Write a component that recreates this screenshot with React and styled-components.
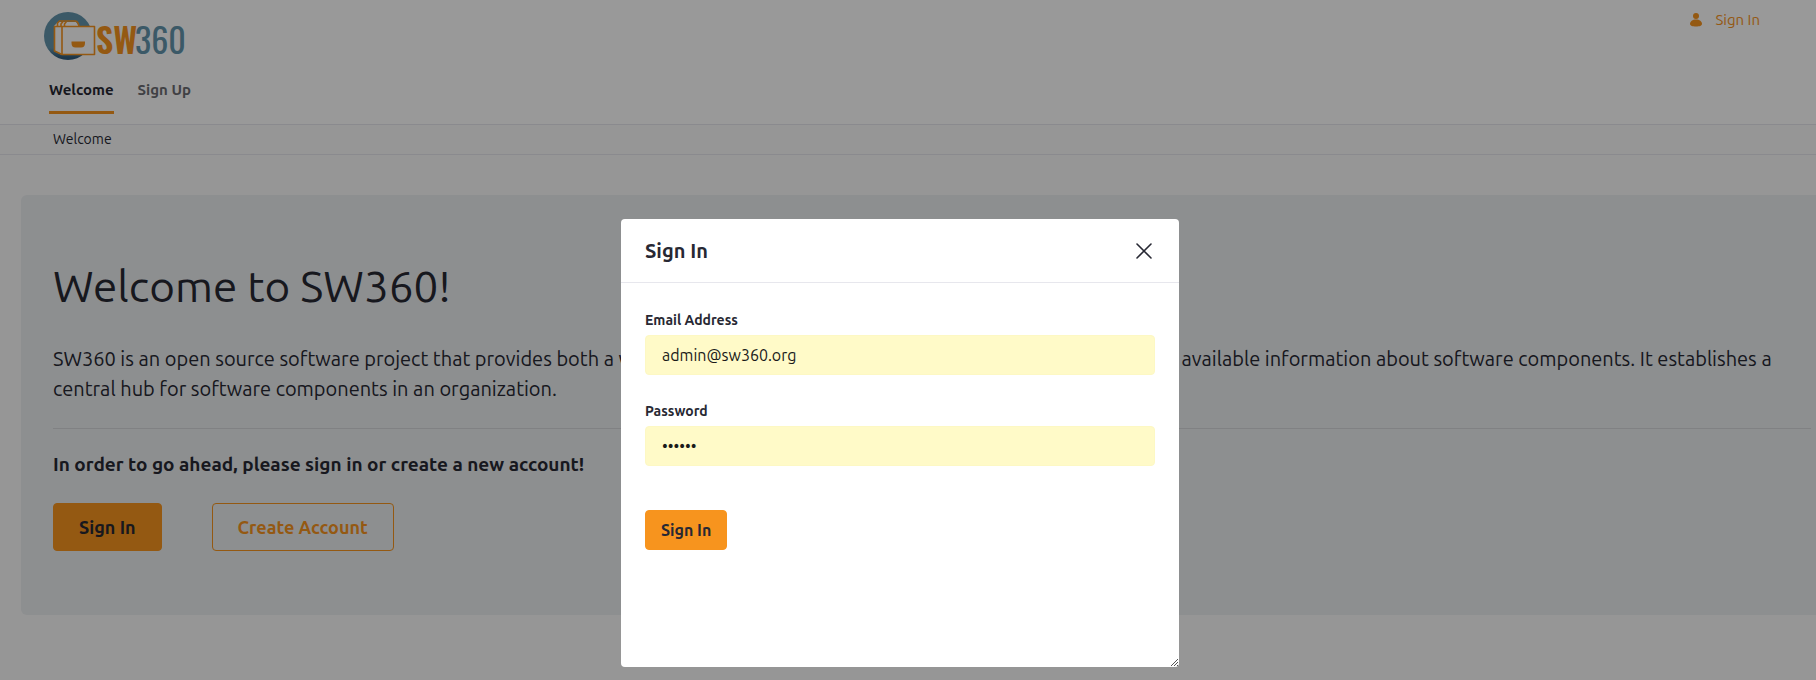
import React from 'react';
import styled, { createGlobalStyle, css } from 'styled-components';

const color = {
  orange: '#f7941e',
  ink: '#272833',
  muted: '#6b6c72',
  blue: '#6394ac',
  navy: '#2f5c7d',
};

const GlobalStyle = createGlobalStyle`
  *, *::before, *::after { box-sizing: border-box; }
  body {
    margin: 0;
    background: #fafafa;
    color: ${color.ink};
    font-family: Ubuntu, "Noto Sans", "Open Sans", sans-serif;
    font-size: 14px;
  }
  button, input { font: inherit; color: inherit; }
  h1, h2, p { margin: 0; }
`;

const Header = styled.header`
  background: #fff;
`;

const Banner = styled.div`
  display: flex;
  justify-content: space-between;
  align-items: flex-start;
  padding: 11px 56px 0 44px;
`;

const LogoLink = styled.a`
  display: block;
  height: 50px;
`;

const LogoImage = styled.svg`
  overflow: visible;
`;

const LogoText = styled.text`
  font-family: Oswald, Roboto, sans-serif;
  font-size: 34px;
  font-weight: ${({ $bold }) => ($bold ? 600 : 400)};
  fill: ${({ $bold }) => ($bold ? color.orange : color.blue)};
`;

const UserLink = styled.a`
  display: flex;
  align-items: center;
  gap: 13px;
  font-size: 15px;
  line-height: 18px;
  color: ${color.orange};
  text-decoration: none;
`;

const Nav = styled.nav`
  display: flex;
  gap: 24px;
  padding: 0 49px 10px;
  border-bottom: 1px solid #e7e7ed;
`;

const NavLink = styled.a`
  padding: 18px 0 10px;
  font-size: 15px;
  line-height: 22px;
  font-weight: 700;
  text-decoration: none;
  color: ${({ $active }) => ($active ? color.ink : color.muted)};
  border-bottom: 3px solid ${({ $active }) => ($active ? color.orange : 'transparent')};
`;

const Breadcrumb = styled.nav`
  padding: 0 53px;
  line-height: 29px;
  border-bottom: 1px solid #e7e7ed;
`;

const Main = styled.main`
  padding: 40px 0 40px 21px;
`;

const Jumbotron = styled.section`
  padding: 64px 5px 64px 32px;
  background: #ebeef0;
  border-radius: 6px 0 0 6px;
`;

const Heading = styled.h1`
  font-size: 44px;
  line-height: 54px;
  font-weight: 400;
`;

const Intro = styled.p`
  margin-top: 31px;
  padding-right: 16px;
  font-size: 20px;
  line-height: 30px;
`;

const Divider = styled.hr`
  margin: 24px 0 22px;
  border: 0;
  border-top: 1px solid #d5d8da;
`;

const Lead = styled.p`
  font-size: 19px;
  line-height: 27px;
  font-weight: 700;
`;

const Actions = styled.div`
  display: flex;
  gap: 50px;
  margin-top: 25px;
`;

const Button = styled.button`
  height: ${({ $large }) => ($large ? 48 : 40)}px;
  padding: 0 ${({ $large }) => ($large ? 25 : 15)}px;
  border: 1px solid ${color.orange};
  border-radius: 4px;
  font-size: ${({ $large }) => ($large ? 18 : 16)}px;
  font-weight: 700;
  cursor: pointer;
  ${({ $outline }) =>
    $outline
      ? css`
          background: transparent;
          color: ${color.orange};
        `
      : css`
          background: ${color.orange};
          color: ${color.ink};
        `}
`;

const Backdrop = styled.div`
  position: fixed;
  inset: 0;
  display: flex;
  justify-content: center;
  align-items: flex-start;
  padding: 219px 16px 0 0;
  background: rgba(0, 0, 0, 0.4);
`;

const Dialog = styled.section`
  position: relative;
  width: 558px;
  min-height: 448px;
  background: #fff;
  border-radius: 4px;
`;

const DialogHeader = styled.header`
  display: flex;
  justify-content: space-between;
  align-items: center;
  height: 64px;
  padding: 0 24px;
  border-bottom: 1px solid #e7e7ed;
`;

const DialogTitle = styled.h2`
  font-size: 20px;
  line-height: 24px;
`;

const CloseButton = styled.button`
  display: flex;
  padding: 3px;
  border: 0;
  background: none;
  cursor: pointer;
`;

const Form = styled.form`
  display: flex;
  flex-direction: column;
  align-items: flex-start;
  gap: 26px;
  padding: 27px 24px 24px;
`;

const Field = styled.div`
  display: flex;
  flex-direction: column;
  gap: 5px;
  width: 100%;
`;

const Label = styled.label`
  font-size: 14px;
  line-height: 20px;
  font-weight: 700;
`;

const Input = styled.input`
  width: 100%;
  height: 40px;
  padding: 0 16px;
  border: 1px solid #fdf8c4;
  border-radius: 4px;
  background: #fffac8;
  color: #1a1a1a;
  font-size: 16px;
  outline: none;
`;

const FormFooter = styled.div`
  padding-top: 18px;
`;

const ResizeGrip = styled.svg`
  position: absolute;
  right: 0;
  bottom: 0;
  cursor: nwse-resize;
`;

const Logo = () => (
  <LogoImage width="146" height="50" viewBox="0 0 146 50" role="img" aria-label="SW360">
    <defs>
      <linearGradient id="disc" x1="0" y1="0" x2="0" y2="1">
        <stop offset="0.75" stopColor={color.blue} />
        <stop offset="0.95" stopColor={color.navy} />
      </linearGradient>
    </defs>
    <circle cx="24" cy="25" r="24" fill="url(#disc)" />
    <path d="M10 15 L14 11 H32 L35 15 H51 V44 H18 L10 40 Z" fill="#fff" />
    <g fill="none" stroke={color.orange} strokeWidth="1.6" strokeLinejoin="round">
      <path d="M18 15.500 H50.500 V43.500 H18 Z" />
      <path d="M18 15.500 H10.500 V40 L18 43.500" />
      <path d="M13.500 15 V12 L15.500 10 H31 Q33 10 34 12 L35 15" />
      <path d="M17 15 V13 L19 10.500 M20.500 15 V13 L22.500 10.500" />
    </g>
    <path d="M27.500 30.500 H41 V32 Q41 36.500 37 36.500 H31.500 Q27.500 36.500 27.500 32 Z" fill={color.orange} />
    <LogoText x="52" y="43" $bold>SW</LogoText>
    <LogoText x="91" y="43">360</LogoText>
  </LogoImage>
);

const UserIcon = () => (
  <svg width="12" height="14" viewBox="0 0 12 14" fill="currentColor" aria-hidden="true">
    <circle cx="6" cy="3" r="3" />
    <path d="M6 6.500 C9.500 6.500 12 8.600 12 10.800 C12 13 9.500 13.500 6 13.500 S0 13 0 10.800 C0 8.600 2.500 6.500 6 6.500 Z" />
  </svg>
);

const CloseIcon = () => (
  <svg width="16" height="16" viewBox="0 0 16 16" stroke={color.ink} strokeWidth="1.6" strokeLinecap="round" aria-hidden="true">
    <path d="M1 1 L15 15 M15 1 L1 15" />
  </svg>
);

const TextField = ({ id, label, ...rest }) => (
  <Field>
    <Label htmlFor={id}>{label}</Label>
    <Input id={id} {...rest} />
  </Field>
);

export default function App() {
  return (
    <>
      <GlobalStyle />
      <Header>
        <Banner>
          <LogoLink href="#home"><Logo /></LogoLink>
          <UserLink href="#signin"><UserIcon />Sign In</UserLink>
        </Banner>
        <Nav aria-label="Main">
          <NavLink href="#welcome" $active>Welcome</NavLink>
          <NavLink href="#signup">Sign Up</NavLink>
        </Nav>
      </Header>
      <Breadcrumb aria-label="Breadcrumb">Welcome</Breadcrumb>
      <Main>
        <Jumbotron>
          <Heading>Welcome to SW360!</Heading>
          <Intro>
            SW360 is an open source software project that provides both a web application and a
            repository to collect, organize and make available information about software
            components. It establishes a central hub for software components in an organization.
          </Intro>
          <Divider />
          <Lead>In order to go ahead, please sign in or create a new account!</Lead>
          <Actions>
            <Button type="button" $large>Sign In</Button>
            <Button type="button" $large $outline>Create Account</Button>
          </Actions>
        </Jumbotron>
      </Main>
      <Backdrop>
        <Dialog role="dialog" aria-modal="true" aria-labelledby="dialog-title">
          <DialogHeader>
            <DialogTitle id="dialog-title">Sign In</DialogTitle>
            <CloseButton type="button" aria-label="Close"><CloseIcon /></CloseButton>
          </DialogHeader>
          <Form onSubmit={(event) => event.preventDefault()}>
            <TextField id="email" label="Email Address" type="email" defaultValue="admin@sw360.org" />
            <TextField id="password" label="Password" type="password" defaultValue="secret" />
            <FormFooter>
              <Button type="submit">Sign In</Button>
            </FormFooter>
          </Form>
          <ResizeGrip width="9" height="9" viewBox="0 0 9 9" stroke="#555" aria-hidden="true">
            <path d="M1 8 L8 1 M4 8 L8 4 M7 8 L8 7" />
          </ResizeGrip>
        </Dialog>
      </Backdrop>
    </>
  );
}
